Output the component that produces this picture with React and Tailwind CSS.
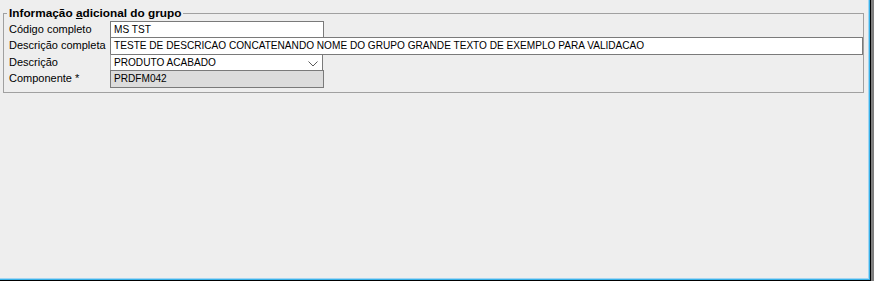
import React from "react";

const font = { fontFamily: '"Liberation Sans", Arial, sans-serif' };

const Row = ({ label, children, first }) => (
    <div className={`flex items-stretch ${first ? "" : "-mt-px"}`}>
        <div className="w-[101px] shrink-0 flex items-center text-[11px] text-black leading-none pb-[1px]">
            {label}
        </div>
        {children}
    </div>
);

const App = () => {
    return (
        <div className="w-[874px] h-[281px] flex bg-[#7f7f7f] overflow-hidden" style={font}>
            <div className="w-[871px] h-[281px] border-r border-b border-black">
                <div className="h-full border-r border-b border-[#3ab2e8]">
                    <div className="h-full border-r border-b border-[#a3d5f2]">
                        <div className="h-full bg-[#eeeeee] pt-[6px] pl-[3px] pr-[4px]">
                            {/* Group box */}
                            <fieldset className="border border-[#a0a0a0] pl-[5px] pr-0 pb-[4px] pt-0 m-0 min-w-0">
                                <legend className="-ml-[2px] px-[2px] text-[11.8px] font-bold text-black leading-[14px]">
                                    Informação <span className="underline">a</span>dicional do grupo
                                </legend>

                                <div className="flex flex-col pt-[1px]">
                                    <Row label="Código completo" first>
                                        <div className="w-[214px] h-[17px] bg-white border border-[#7a7a7a] flex items-center pl-[3px] text-[10.1px] text-black">
                                            MS TST
                                        </div>
                                    </Row>
                                    <Row label="Descrição completa">
                                        <div className="flex-1 h-[18px] bg-white border border-[#7a7a7a] flex items-center pl-[3px] text-[10.1px] text-black whitespace-nowrap">
                                            TESTE DE DESCRICAO CONCATENANDO NOME DO GRUPO GRANDE TEXTO DE EXEMPLO PARA VALIDACAO
                                        </div>
                                    </Row>
                                    <Row label="Descrição">
                                        <div className="w-[213px] h-[17px] bg-white border border-[#7a7a7a] border-l-[#a8a8a8] flex items-center justify-between pl-[3px] pr-[4px] text-[10.1px] text-black">
                                            <span>PRODUTO ACABADO</span>
                                            <svg width="10" height="6" viewBox="0 0 10 6" className="mt-[2px]">
                                                <path d="M0.5 0.5 L5 5 L9.5 0.5" fill="none" stroke="#5a5a5a" strokeWidth="1" />
                                            </svg>
                                        </div>
                                    </Row>
                                    <Row label="Componente *">
                                        <div className="w-[214px] h-[18px] bg-[#dcdcdc] border border-[#7a7a7a] flex items-center pl-[3px] text-[10.1px] text-black">
                                            PRDFM042
                                        </div>
                                    </Row>
                                </div>
                            </fieldset>
                        </div>
                    </div>
                </div>
            </div>
        </div>
    );
};

export default App;
